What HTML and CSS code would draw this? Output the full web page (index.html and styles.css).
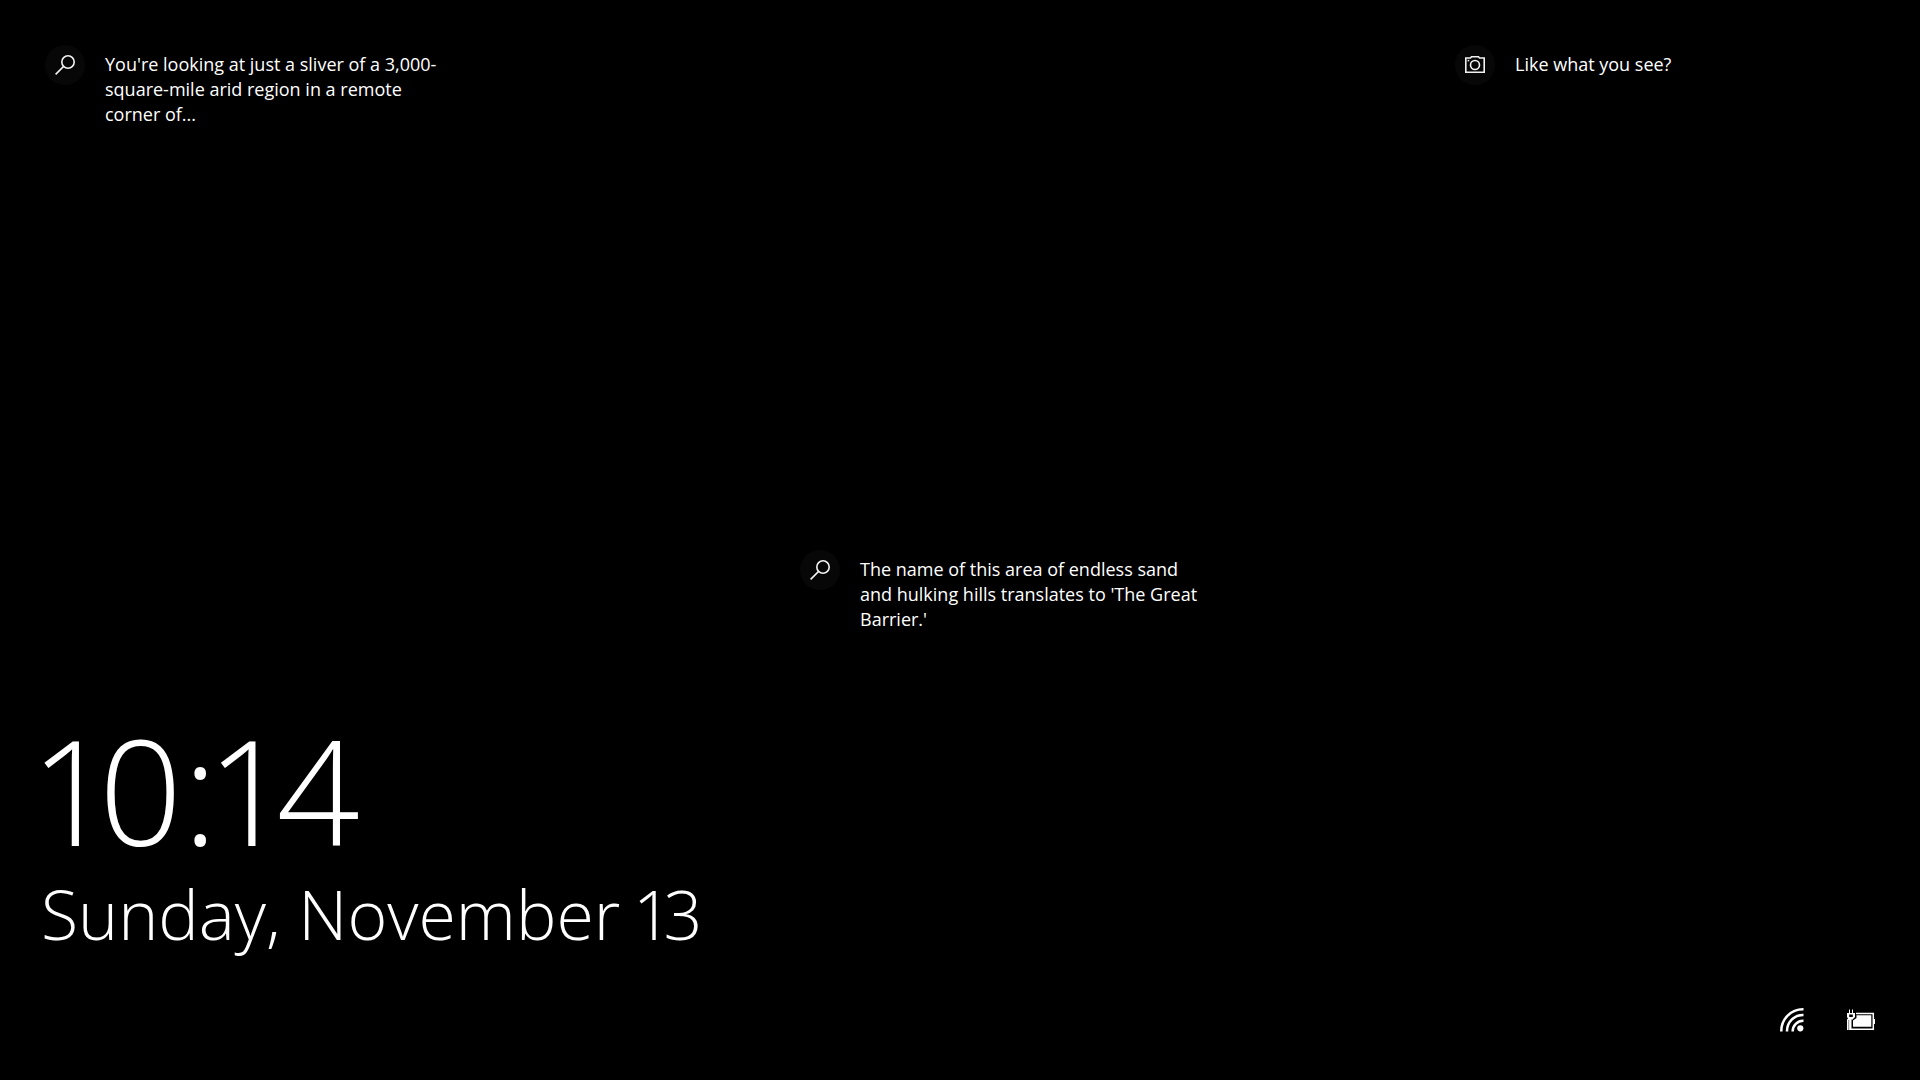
FILE: index.html
```html
<!DOCTYPE html>
<html lang="en">
<head>
<meta charset="utf-8">
<title>Lock screen</title>
<link rel="stylesheet" href="styles.css">
</head>
<body>
<main class="lock">
  <header class="row">
    <a class="hotspot" href="#region">
      <span class="disc"><svg class="icon" viewBox="0 0 20 20" aria-hidden="true"><circle cx="13" cy="7" r="6.2"/><path d="M8.6 11.4 0.6 19.4"/></svg></span>
      <span class="label">You're looking at just a sliver of a 3,000-<br>square-mile arid region in a remote<br>corner of...</span>
    </a>
    <a class="hotspot right" href="#feedback">
      <span class="disc"><svg class="icon" viewBox="0 0 20 20" aria-hidden="true"><path d="M.8 3H5.500L6.500 1.800H13.500L14.500 3H19.200V17.200H.8Z"/><circle cx="10" cy="10" r="4.500"/><path d="M2.600 5.600h1.600"/></svg></span>
      <span class="label">Like what you see?</span>
    </a>
  </header>
  <section class="row middle">
    <a class="hotspot center" href="#name">
      <span class="disc"><svg class="icon" viewBox="0 0 20 20" aria-hidden="true"><circle cx="13" cy="7" r="6.2"/><path d="M8.6 11.4 0.6 19.4"/></svg></span>
      <span class="label">The name of this area of endless sand<br>and hulking hills translates to 'The Great<br>Barrier.'</span>
    </a>
  </section>
  <section class="clock">
    <time class="time">10:14</time>
    <time class="date">Sunday, November 13</time>
  </section>
  <footer class="status">
    <svg class="wifi" viewBox="0 0 24 24" role="img" aria-label="Wi-Fi"><path d="M1.3 23.500A21.700 21.700 0 0 1 23.500 1.300M7 23.500A16 16 0 0 1 23.500 7M12.700 23.500A10.500 10.500 0 0 1 23.500 12.700"/><circle cx="20.300" cy="20.300" r="3.100"/></svg>
    <svg class="battery" viewBox="0 0 28 21" role="img" aria-label="Battery, charging">
      <path class="outline" d="M9 4.500H26.300V20.300H5"/>
      <path class="fill" d="M9.500 6.300H24.300V17.700H6V11.500L9.500 9ZM27 10H28V15H27Z"/>
      <path class="fill" d="M2 .6H3V4H5V.6H6V4H8V8L6 10V21H0V10.500L1 9.500 0 8V4H2Z"/>
      <path class="gap" d="M2.200 5.500H5.800V8H2.200ZM4.500 10.500H6V19.500H4.500Z"/>
      <path class="shade" d="M1.200 11H2.200V21H1.200Z"/>
    </svg>
  </footer>
</main>
</body>
</html>
```
FILE: styles.css
```css
* { box-sizing: border-box; }
body {
  margin: 0;
  background: #000;
  color: #fff;
  font-family: "Open Sans", "Noto Sans", sans-serif;
}
.lock {
  min-height: 100vh;
  display: flex;
  flex-direction: column;
  padding: 45px 45px 48px;
}
.row {
  display: grid;
  grid-template-columns: 755fr 655fr 420fr;
}
.right { grid-column: 3; }
.center { grid-column: 2; }
.middle {
  flex: 1;
  align-items: end;
  padding-bottom: 78px;
}
.hotspot {
  display: flex;
  align-items: flex-start;
  gap: 20px;
  color: #fff;
  text-decoration: none;
}
.disc {
  flex: none;
  display: grid;
  place-items: center;
  width: 40px;
  height: 40px;
  border-radius: 50%;
  background: #070707;
}
.icon {
  width: 20px;
  height: 20px;
  fill: none;
  stroke: #f2f2f2;
  stroke-width: 1.6;
}
.label {
  padding-top: 7px;
  font-size: 18px;
  line-height: 25px;
  white-space: nowrap;
}
.clock {
  display: flex;
  flex-direction: column;
  margin-left: -4px;
  font-weight: 300;
  font-variant-numeric: proportional-nums;
}
.time {
  font-size: 146px;
  line-height: 160px;
}
.date {
  font-size: 68px;
  line-height: 88px;
}
.status {
  display: flex;
  justify-content: flex-end;
  align-items: flex-end;
  gap: 43px;
  padding-top: 50px;
}
.wifi {
  width: 24px;
  height: 24px;
  fill: none;
  stroke: #fff;
  stroke-width: 2.5;
}
.wifi circle { fill: #fff; stroke: none; }
.battery { width: 28px; height: 21px; margin-bottom: 2px; }
.outline { fill: none; stroke: #fff; stroke-width: 1.5; }
.fill { fill: #fff; }
.gap { fill: #000; }
.shade { fill: #888; }
```
